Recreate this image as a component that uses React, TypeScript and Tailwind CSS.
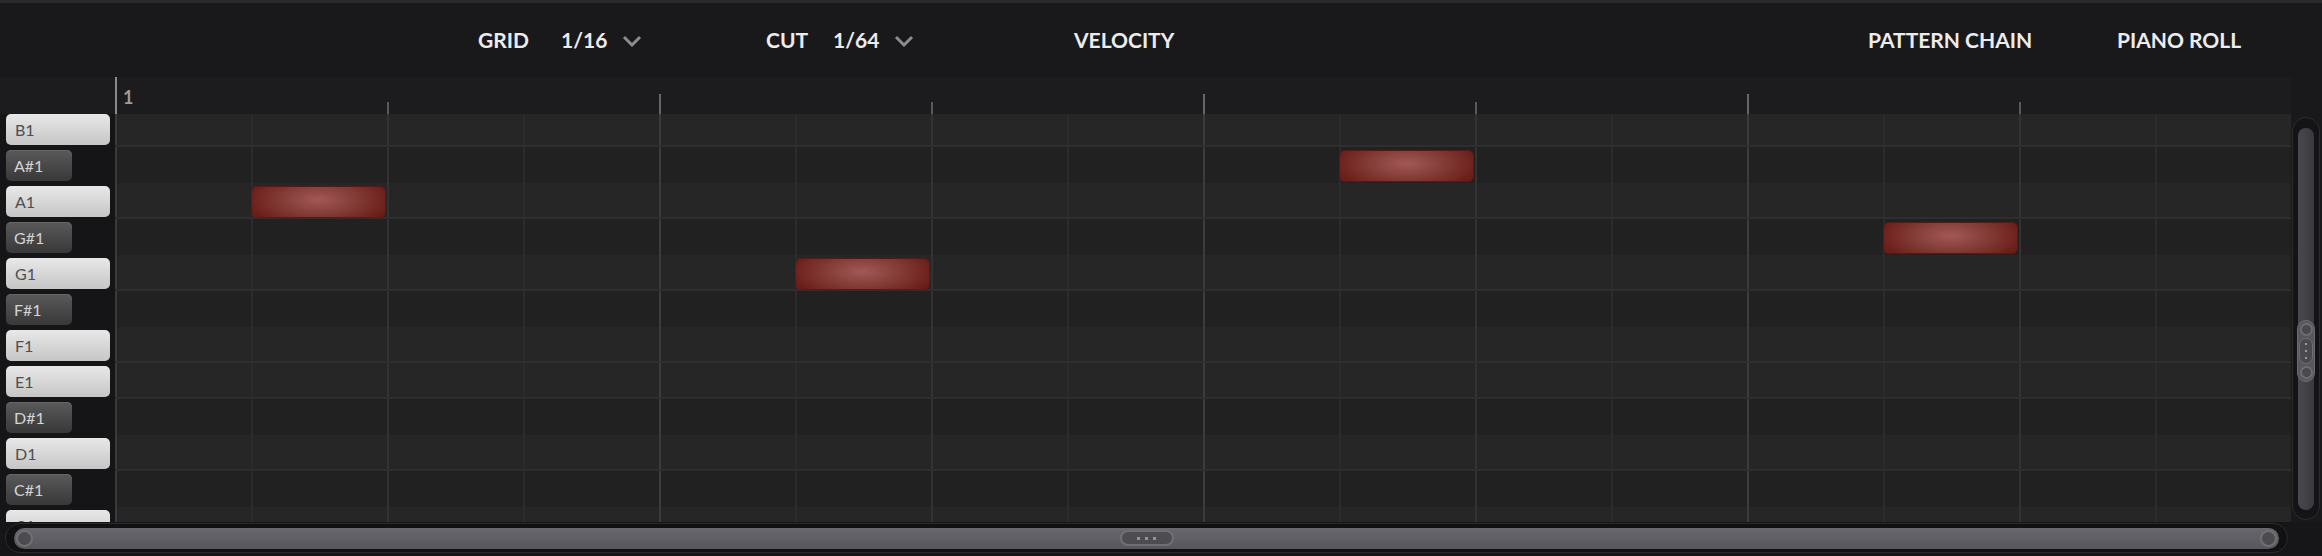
import React from 'react';

const ROWS: { name: string; black: boolean }[] = [
  { name: 'B1', black: false },
  { name: 'A#1', black: true },
  { name: 'A1', black: false },
  { name: 'G#1', black: true },
  { name: 'G1', black: false },
  { name: 'F#1', black: true },
  { name: 'F1', black: false },
  { name: 'E1', black: false },
  { name: 'D#1', black: true },
  { name: 'D1', black: false },
  { name: 'C#1', black: true },
  { name: 'C1', black: false },
];

// row index -> beat index (16 beats, 4 bars)
const NOTES: Record<number, number> = { 1: 9, 2: 1, 3: 13, 4: 5 };

const BEATS = Array.from({ length: 16 }, (_, i) => i);

function lineClass(k: number) {
  if (k === 0) return 'border-[#3a3a3a]';
  if (k % 4 === 0) return 'border-[#3c3c3c]';
  if (k % 2 === 0) return 'border-[#323232]';
  return 'border-[#2b2b2b]';
}

function Chevron() {
  return (
    <svg width="20" height="12" viewBox="0 0 20 12" fill="none" className="mt-[2px]">
      <polyline points="2,2 10,10 18,2" stroke="#8c8c8c" strokeWidth="3" />
    </svg>
  );
}

function Header() {
  return (
    <div className="flex h-[77px] shrink-0 items-center border-t-[3px] border-[#29292b] bg-[#19191b] text-[21px] font-bold text-[#ececec]">
      <div className="w-[478px]" />
      <div className="w-[83px]">GRID</div>
      <div className="w-[61px]">1/16</div>
      <div className="w-[144px]">
        <Chevron />
      </div>
      <div className="w-[67px]">CUT</div>
      <div className="w-[61px]">1/64</div>
      <div className="w-[180px]">
        <Chevron />
      </div>
      <div className="w-[794px]">VELOCITY</div>
      <div className="w-[249px]">PATTERN CHAIN</div>
      <div>PIANO ROLL</div>
    </div>
  );
}

function Ruler() {
  return (
    <div className="flex h-[37px] shrink-0 bg-[#1c1c1e]">
      <div className="w-[115px]" />
      <div className="flex w-[2176px]">
        {BEATS.map((k) => (
          <div key={k} className="flex h-full w-[136px] items-end">
            {k === 0 && <div className="h-full w-[2px] bg-[#8a8a8a]" />}
            {k !== 0 && k % 4 === 0 && <div className="h-[20px] w-[2px] bg-[#666666]" />}
            {k % 4 === 2 && <div className="h-[12px] w-[2px] bg-[#5a5a5a]" />}
            {k === 0 && (
              <div className="ml-[6px] self-start pt-[11px] text-[18px] leading-[18px] font-bold text-[#9c9c9c]">1</div>
            )}
          </div>
        ))}
      </div>
    </div>
  );
}

function Key({ name, black }: { name: string; black: boolean }) {
  return black ? (
    <div className="mt-[3px] flex h-[31px] w-[66px] items-center rounded-[5px] bg-gradient-to-b from-[#5a5a5a] to-[#383838] pl-[8px] text-[16px] text-[#d4d4d4] shadow-[inset_0_1px_0_#666]">
      {name}
    </div>
  ) : (
    <div className="mt-[3px] flex h-[31px] w-[104px] items-center rounded-[5px] bg-gradient-to-b from-[#e8e8e8] to-[#c6c6c6] pl-[9px] text-[16px] text-[#4e4e4e]">
      {name}
    </div>
  );
}

function Row({ index, name, black }: { index: number; name: string; black: boolean }) {
  const note = NOTES[index];
  return (
    <div className="flex h-[36px] shrink-0">
      <div className="w-[115px] shrink-0 bg-[#151517] pl-[6px]">
        <Key name={name} black={black} />
      </div>
      <div
        className={
          black
            ? 'grid w-[2176px] grid-cols-16 bg-[#212121]'
            : 'grid w-[2176px] grid-cols-16 border-b-2 border-[#2e2e2e] bg-[#262626]'
        }
      >
        {BEATS.map((k) => (
          <div key={k} className={`relative border-l-2 ${lineClass(k)}`}>
            {note === k && (
              <div className="absolute top-[3px] right-[1px] left-[-2px] z-10 h-[32px] rounded-[6px] border border-[#5e1813] bg-[radial-gradient(ellipse_55%_95%_at_50%_42%,#a35858_0%,#86403a_45%,#6b1d18_100%)]" />
            )}
          </div>
        ))}
      </div>
    </div>
  );
}

function VScroll() {
  return (
    <div className="w-[31px] shrink-0 bg-[#19191b] pl-[1px]">
      <div className="mt-[40px] flex h-[403px] w-[28px] flex-col rounded-[14px] border border-[#2c2c2e] bg-[#141416] px-[5px] pt-[10px] pb-[9px]">
        <div className="flex flex-1 flex-col rounded-full bg-gradient-to-r from-[#4a4a4e] to-[#3a3a3e]">
          <div className="h-[192px]" />
          <div className="-mx-[1px] flex h-[62px] flex-col items-center justify-between rounded-[9px] border border-[#6c6c70] bg-[#58585c] py-[2px]">
            <div className="h-[13px] w-[13px] rounded-full border-2 border-[#6e6e72] bg-[#4a4a4e]" />
            <div className="flex h-[26px] w-[14px] flex-col items-center justify-center gap-[5px] rounded-[7px] border border-[#6e6e72] bg-[#4a4a4e]">
              <div className="h-[2px] w-[2px] bg-[#9a9a9a]" />
              <div className="h-[2px] w-[2px] bg-[#9a9a9a]" />
              <div className="h-[2px] w-[2px] bg-[#9a9a9a]" />
            </div>
            <div className="h-[13px] w-[13px] rounded-full border-2 border-[#6e6e72] bg-[#4a4a4e]" />
          </div>
        </div>
      </div>
    </div>
  );
}

function HScroll() {
  return (
    <div className="flex h-[34px] shrink-0 items-start bg-[#161618] pt-[1px] pl-[5px]">
      <div className="flex h-[30px] w-[2283px] items-center rounded-[15px] border border-[#2a2a2c] bg-[#111113] px-[8px]">
        <div className="flex h-[21px] flex-1 items-center justify-between rounded-full bg-gradient-to-b from-[#68686e] to-[#56565c] px-[2px]">
          <div className="h-[17px] w-[17px] rounded-full border-2 border-[#707074] bg-[#4c4c50]" />
          <div className="flex h-[16px] w-[54px] items-center justify-center gap-[5px] rounded-full border-2 border-[#707074] bg-[#4d4d51]">
            <div className="h-[3px] w-[3px] bg-[#959595]" />
            <div className="h-[3px] w-[3px] bg-[#959595]" />
            <div className="h-[3px] w-[3px] bg-[#959595]" />
          </div>
          <div className="h-[17px] w-[17px] rounded-full border-2 border-[#707074] bg-[#4c4c50]" />
        </div>
      </div>
    </div>
  );
}

export default function App() {
  return (
    <div className="flex h-[556px] w-[2322px] flex-col overflow-hidden bg-[#19191b] font-['Lato','Liberation_Sans',sans-serif]">
      <Header />
      <div className="flex h-[445px] shrink-0">
        <div className="flex w-[2291px] flex-col">
          <Ruler />
          <div className="h-[408px] overflow-hidden">
            <div className="-mt-[3px] flex flex-col">
              {ROWS.map((r, i) => (
                <Row key={r.name} index={i} name={r.name} black={r.black} />
              ))}
            </div>
          </div>
        </div>
        <VScroll />
      </div>
      <HScroll />
    </div>
  );
}
